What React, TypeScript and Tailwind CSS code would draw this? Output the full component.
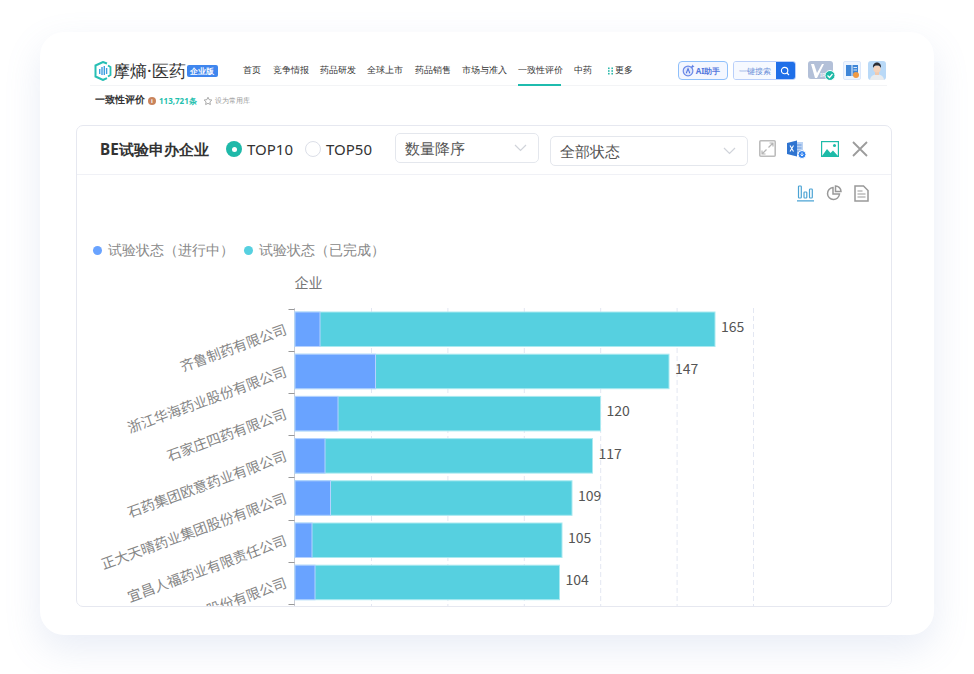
import React from "react";

const navItems = [
  { t: "首页", w: "w-[18px]", ml: "ml-0" },
  { t: "竞争情报", w: "w-[36px]", ml: "ml-[12px]" },
  { t: "药品研发", w: "w-[36px]", ml: "ml-[11px]" },
  { t: "全球上市", w: "w-[36px]", ml: "ml-[11px]" },
  { t: "药品销售", w: "w-[36px]", ml: "ml-[12px]" },
  { t: "市场与准入", w: "w-[44px]", ml: "ml-[11px]" },
];

const rows = [
  { name: "齐鲁制药有限公司", a: 320, b: 715, v: 165 },
  { name: "浙江华海药业股份有限公司", a: 375.5, b: 669, v: 147 },
  { name: "石家庄四药有限公司", a: 338, b: 600.5, v: 120 },
  { name: "石药集团欧意药业有限公司", a: 325, b: 592.5, v: 117 },
  { name: "正大天晴药业集团股份有限公司", a: 330.5, b: 572, v: 109 },
  { name: "宜昌人福药业有限责任公司", a: 312, b: 562, v: 105 },
  { name: "华润赛科药业股份有限公司", a: 315, b: 559.5, v: 104 },
];

function Logo() {
  return (
    <svg width="18" height="20" viewBox="0 0 18 20" className="shrink-0">
      <path d="M13 2.500 9 1 1.500 4.500v11L9 19l4-1.800" fill="none" stroke="#27bfb4" strokeWidth="2" />
      <path d="M14 4.500 16.500 6v8L14 15.500" fill="none" stroke="#27bfb4" strokeWidth="1.800" />
      <g fill="#3f9fe0">
        <rect x="5" y="8" width="1.400" height="5" />
        <rect x="7.300" y="6" width="1.400" height="8" />
        <rect x="9.600" y="5" width="1.400" height="9" />
        <rect x="11.900" y="7" width="1.400" height="6" />
      </g>
    </svg>
  );
}

function Chevron() {
  return (
    <svg width="13" height="8" viewBox="0 0 13 8" className="shrink-0">
      <path d="M1 1l5.500 5.500L12 1" fill="none" stroke="#d0d3da" strokeWidth="1.200" />
    </svg>
  );
}

function Chart() {
  const grids = [371, 447.4, 523.8, 600.2, 676.6, 753];
  const ticks = [308.5, 350.7, 392.9, 435.1, 477.3, 519.5, 561.7, 603.9];
  return (
    <svg width="814" height="337" viewBox="77 270 814 337" className="block" style={{ fontFamily: '"Noto Sans CJK SC", sans-serif' }}>
      {grids.map((x) => (
        <line key={x} x1={x + 0.5} x2={x + 0.5} y1="308" y2="607" stroke="#e3e7f2" strokeDasharray="5 3" />
      ))}
      <text x="294.5" y="288" fontSize="14" fill="#777">企业</text>
      <line x1="294.5" x2="294.5" y1="308" y2="607" stroke="#c9ccd6" />
      {ticks.map((y) => (
        <line key={y} x1="288.5" x2="294.5" y1={Math.round(y) + 0.5} y2={Math.round(y) + 0.5} stroke="#999" />
      ))}
      {rows.map((r, i) => {
        const y = 312 + i * 42.2;
        const cy = y + 17;
        return (
          <g key={r.name}>
            <rect x="295" y={y} width={r.b - 295} height="34.5" fill="#56d0e0" stroke="#a9e9f0" strokeWidth="1" />
            <rect x="295" y={y} width={r.a - 295} height="34.5" fill="#69a3ff" stroke="#b5d1ff" strokeWidth="1" />
            <text x={r.b + 6} y={cy + 3} fontSize="14" fill="#555">{r.v}</text>
            <text x="286" y={cy + 5} fontSize="14" fill="#868686" textAnchor="end" transform={`rotate(-20 286 ${cy})`}>{r.name}</text>
          </g>
        );
      })}
    </svg>
  );
}

export default function App() {
  return (
    <div className="w-[974px] h-[674px] bg-white pt-[32px] px-[40px] overflow-hidden font-['Noto_Sans_CJK_SC',sans-serif]">
      <div className="w-[894px] h-[603px] bg-white rounded-[24px] shadow-[0_14px_36px_rgba(120,140,200,0.16)] pt-[24px] px-[36px] overflow-hidden">
        {/* top nav */}
        <div className="flex items-center h-[30px] ml-[14px] w-[797px] border-b border-[#f3f4f6] relative">
          <div className="flex items-center w-[4px]" />
          <Logo />
          <span className="ml-[1px] text-[17px] leading-[20px] text-[#333] font-medium whitespace-nowrap">摩熵·医药</span>
          <span className="ml-[1px] w-[31px] h-[12px] rounded-[2px] bg-[#3f86ee] text-white text-[7.5px] leading-[12px] font-bold text-center whitespace-nowrap">企业版</span>
          <div className="flex items-center ml-[25px] h-full text-[8.8px] text-[#333] whitespace-nowrap">
            {navItems.map((n) => (
              <span key={n.t} className={`${n.w} ${n.ml}`}>{n.t}</span>
            ))}
            <span className="ml-[12px] w-[43px] h-full flex items-center border-b-2 border-[#1fbcae] mb-[-1px] pt-[1px]">一致性评价</span>
            <span className="ml-[13px] w-[18px]">中药</span>
            <span className="ml-[16px] flex items-center gap-[1px]">
              <svg width="6" height="8" viewBox="0 0 6 8">
                <g fill="#2bb8aa">
                  <rect x="0" y="0.5" width="1.6" height="1.6" /><rect x="3.4" y="0.5" width="1.6" height="1.6" />
                  <rect x="0" y="3.2" width="1.6" height="1.6" /><rect x="3.4" y="3.2" width="1.6" height="1.6" />
                  <rect x="0" y="5.9" width="1.6" height="1.6" /><rect x="3.4" y="5.9" width="1.6" height="1.6" />
                </g>
              </svg>
              更多
            </span>
          </div>
          <div className="flex items-center ml-[45px] h-[19px]">
            <div className="w-[50px] h-[19px] rounded-[4px] border border-[#8fc0fb] bg-[#f4f7ff] flex items-center pl-[3px] gap-[1px]">
              <svg width="13" height="13" viewBox="0 0 14 14" className="shrink-0">
                <circle cx="6.500" cy="7.500" r="5.200" fill="#dfe6fb" stroke="#6c8ae8" strokeWidth="1.300" />
                <path d="M4.600 10l1.900-5 1.900 5" fill="none" stroke="#4f73e0" strokeWidth="1.100" />
                <path d="M11.500 0.500l.6 1.400 1.400.6-1.400.6-.6 1.400-.6-1.400-1.400-.6 1.400-.6z" fill="#5b7de6" />
              </svg>
              <span className="text-[8px] font-bold text-[#5577dd] whitespace-nowrap">AI助手</span>
            </div>
            <div className="ml-[5px] w-[63px] h-[19px] flex rounded-[3px] overflow-hidden border border-[#b9cffa]">
              <span className="w-[43px] bg-[#f6f9ff] text-[8px] leading-[17px] text-center text-[#6a8fd8] whitespace-nowrap">一键搜索</span>
              <span className="w-[19px] bg-[#1f6fe8] flex items-center justify-center">
                <svg width="10" height="10" viewBox="0 0 10 10">
                  <circle cx="4.600" cy="4.600" r="3.200" fill="none" stroke="#fff" strokeWidth="1.100" />
                  <path d="M7 7l2 2" stroke="#fff" strokeWidth="1.100" />
                </svg>
              </span>
            </div>
            <svg width="27" height="20" viewBox="0 0 27 20" className="ml-[12px] shrink-0">
              <rect x="0" y="0" width="25" height="18" rx="3" fill="#b3c0d8" />
              <path d="M3 3h3l3 9 5-9h2L9 17H7z" fill="#fff" />
              <text x="12" y="16" fontSize="6" fill="#fff">IP</text>
              <circle cx="22" cy="14.500" r="5" fill="#1fb9a6" stroke="#fff" />
              <path d="M19.500 14.500l2 2 3-3.500" fill="none" stroke="#fff" strokeWidth="1.200" />
            </svg>
            <div className="ml-[8px] w-[18px] h-[19px] rounded-[2px] bg-[#eef5ff] border border-[#dce8fb] flex items-center justify-center relative shrink-0">
              <svg width="14" height="13" viewBox="0 0 14 13">
                <rect x="1" y="1" width="5.500" height="11" fill="#3f86d8" />
                <rect x="7.500" y="1" width="5.500" height="11" fill="#3f86d8" />
                <path d="M8.500 3.500h3.500M8.500 6h3.500" stroke="#fff" strokeWidth="0.800" />
              </svg>
              <span className="absolute right-[1px] bottom-[1px] w-[6px] h-[6px] rounded-full bg-[#f09a45]" />
            </div>
            <svg width="18" height="19" viewBox="0 0 18 19" className="ml-[7px] shrink-0">
              <rect width="18" height="19" rx="3" fill="#b9d9f7" />
              <path d="M2 19c.5-4 3-5.500 7-5.500s6.500 1.500 7 5.500z" fill="#e9ecef" />
              <rect x="7" y="10" width="4" height="4" fill="#f0c9ae" />
              <circle cx="9" cy="8" r="3.600" fill="#f5d3bb" />
              <path d="M5 7c-.5-4 2-5.500 4-5.500S13.500 3 13 7c-1-2-2-2.500-4-2.500S6 5 5 7z" fill="#2c2c33" />
            </svg>
          </div>
        </div>

        {/* sub header */}
        <div className="flex items-center h-[15px] mt-[7px] ml-[19px] whitespace-nowrap">
          <span className="text-[9.7px] font-bold text-[#333]">一致性评价</span>
          <span className="ml-[3px] w-[8px] h-[8px] rounded-full bg-[#c9845c] text-white text-[6px] leading-[8px] text-center font-bold">i</span>
          <span className="ml-[3px] text-[8px] font-bold text-[#25bfae]">113,721条</span>
          <svg width="10" height="10" viewBox="0 0 24 24" className="ml-[6px]">
            <path d="M12 3l2.800 5.800 6.400.9-4.600 4.500 1.100 6.300L12 17.600 6.300 20.500l1.100-6.300L2.800 9.700l6.400-.9z" fill="none" stroke="#999" strokeWidth="2" />
          </svg>
          <span className="ml-[2px] text-[7.4px] text-[#999]">设为常用库</span>
        </div>

        {/* panel */}
        <div className="mt-[17px] w-[816px] h-[482px] rounded-[7px] border border-[#e6e8f0] overflow-hidden bg-white">
          <div className="flex items-start h-[49px] border-b border-[#f0f1f6] relative">
            <span className="ml-[23px] mt-[12px] text-[15.3px] leading-[22px] font-bold text-[#333] whitespace-nowrap w-[110px]">BE试验申办企业</span>
            <span className="ml-[16px] mt-[15px] w-[16px] h-[16px] rounded-full bg-[#1fb9a9] flex items-center justify-center">
              <span className="w-[5px] h-[5px] rounded-full bg-white" />
            </span>
            <span className="ml-[5px] mt-[12px] w-[58px] text-[15px] leading-[22px] text-[#333]">TOP10</span>
            <span className="mt-[15px] w-[16px] h-[16px] rounded-full border border-[#dcdfe8] bg-white" />
            <span className="ml-[5px] mt-[12px] w-[69px] text-[15px] leading-[22px] text-[#333]">TOP50</span>
            <div className="mt-[7px] w-[144px] h-[30px] rounded-[5px] border border-[#e4e7ed] flex items-center justify-between pl-[9px] pr-[11px]">
              <span className="text-[15px] text-[#555]">数量降序</span>
              <Chevron />
            </div>
            <div className="ml-[11px] mt-[10px] w-[198px] h-[30px] rounded-[5px] border border-[#e4e7ed] flex items-center justify-between pl-[9px] pr-[11px]">
              <span className="text-[15px] text-[#555]">全部状态</span>
              <Chevron />
            </div>
            <svg width="17" height="17" viewBox="0 0 17 17" className="ml-[11px] mt-[14px] shrink-0">
              <rect x="0.800" y="0.800" width="15.400" height="15.400" rx="1" fill="none" stroke="#bcbcbc" strokeWidth="1.600" />
              <path d="M9.500 7.500l4-4M10.500 3h3.500v3.500M7.500 9.500l-4 4M3 10.500V14h3.500" fill="none" stroke="#b5b5b5" strokeWidth="1.200" />
            </svg>
            <svg width="20" height="19" viewBox="0 0 20 19" className="ml-[11px] mt-[14px] shrink-0">
              <path d="M8 2h8v13H8z" fill="#bcd3f2" />
              <path d="M9.500 5h5M9.500 8h5M9.500 11h5" stroke="#5a8fdc" strokeWidth="0.900" />
              <path d="M0 3l10-2.500v16L0 14z" fill="#2f74d0" />
              <path d="M3 5.500l3.500 6M6.500 5.500l-3.500 6" stroke="#fff" strokeWidth="1.100" />
              <circle cx="15" cy="14.500" r="4" fill="#2f80ed" stroke="#fff" />
              <path d="M15 12.500v3M13.500 14.500l1.500 1.500 1.500-1.500" fill="none" stroke="#fff" strokeWidth="0.900" />
            </svg>
            <svg width="18" height="16" viewBox="0 0 18 16" className="ml-[14px] mt-[15px] shrink-0">
              <rect x="0.600" y="0.600" width="16.800" height="14.800" fill="#fff" stroke="#1dbba8" strokeWidth="1.200" />
              <path d="M1 15l5-7 3.500 4 2.500-2.500 5 5.500z" fill="#1dbba8" />
              <circle cx="13.500" cy="4.500" r="1.500" fill="#1dbba8" />
            </svg>
            <svg width="16" height="16" viewBox="0 0 16 16" className="ml-[13px] mt-[15px] shrink-0">
              <path d="M1 1l14 14M15 1L1 15" stroke="#9c9c9c" strokeWidth="1.800" />
            </svg>
          </div>

          <div className="flex justify-end items-center h-[35px] pr-[22px] gap-[12px] pt-[1px]">
            <svg width="17" height="17" viewBox="0 0 17 17">
              <g fill="none" stroke="#4ba3d4" strokeWidth="1.200">
                <rect x="1.500" y="1" width="2.800" height="12" rx="0.800" />
                <rect x="7" y="7" width="2.800" height="6" rx="0.800" />
                <rect x="12.500" y="4" width="2.800" height="9" rx="0.800" />
              </g>
              <path d="M0 15.800h17" stroke="#4ba3d4" strokeWidth="1.200" />
            </svg>
            <svg width="16" height="16" viewBox="0 0 16 16" className="mt-[-1px]">
              <path d="M7 2.500a6 6 0 1 0 6.500 6.500H7z" fill="none" stroke="#999" strokeWidth="1.500" />
              <path d="M9.500 1a5.500 5.500 0 0 1 5.500 5.500H9.500z" fill="none" stroke="#999" strokeWidth="1.500" />
            </svg>
            <svg width="15" height="17" viewBox="0 0 15 17">
              <path d="M1 1h8.500L14 5.500V16H1z" fill="none" stroke="#999" strokeWidth="1.500" />
              <path d="M3.500 6h5M3.500 9h8M3.500 12h8" stroke="#999" strokeWidth="1.200" />
            </svg>
          </div>

          <div className="flex items-center h-[22px] mt-[29px] pl-[16px] text-[13.5px] text-[#888] whitespace-nowrap">
            <span className="w-[9px] h-[9px] rounded-full bg-[#69a3ff]" />
            <span className="ml-[6px] w-[136px]">试验状态（进行中）</span>
            <span className="w-[9px] h-[9px] rounded-full bg-[#56d0e0]" />
            <span className="ml-[6px]">试验状态（已完成）</span>
          </div>
          <div className="mt-[9px]">
            <Chart />
          </div>
        </div>
      </div>
    </div>
  );
}
